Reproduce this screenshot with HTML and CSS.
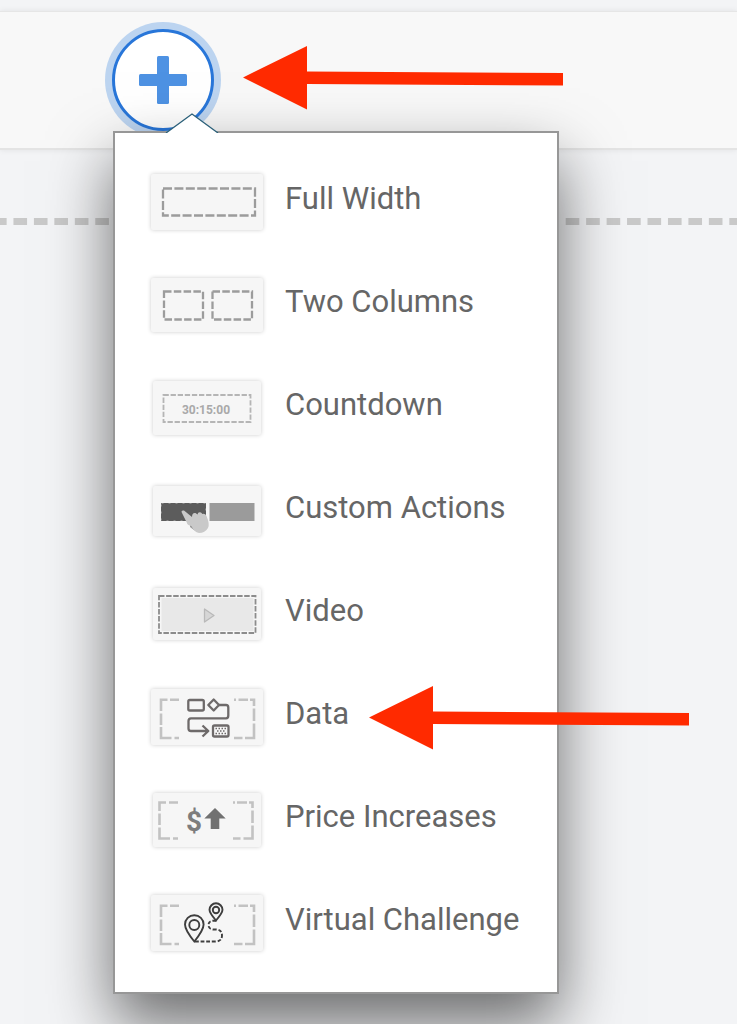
FILE: index.html
```html
<!DOCTYPE html>
<html lang="en">
<head>
    <meta charset="UTF-8">
    <meta name="viewport" content="width=device-width, initial-scale=1.0">
    <title>Add Section</title>
    <link rel="stylesheet" href="styles.css">
</head>
<body>
    <header class="toolbar">
        <div class="add-section">
            <button type="button" class="add-btn" aria-label="Add section" aria-expanded="true">
                <svg class="plus" viewBox="0 0 48 48" aria-hidden="true">
                    <rect x="18" y="0" width="12" height="48" rx="1.5"/>
                    <rect x="0" y="18" width="48" height="12" rx="1.5"/>
                </svg>
            </button>

            <div class="menu">
                <svg class="menu-caret" viewBox="0 0 54 20" aria-hidden="true">
                    <path class="caret-fill" d="M1 20 27 1 53 20z"/>
                    <path class="caret-line" d="M1 20 27 1 53 20"/>
                </svg>
                <ul class="menu-list">
                    <li>
                        <button type="button" class="menu-item">
                            <span class="thumb">
                                <svg class="card" width="112" height="56" viewBox="0 0 112 56" aria-hidden="true">
                                    <path class="dash" stroke-dasharray="9 2.4" d="M12 14.5H104V41.5H12z"/>
                                </svg>
                            </span>
                            <span class="label">Full Width</span>
                        </button>
                    </li>
                    <li>
                        <button type="button" class="menu-item">
                            <span class="thumb">
                                <svg class="card" width="112" height="54" viewBox="0 0 112 54" aria-hidden="true">
                                    <path class="dash" stroke-dasharray="7.5 2.3" d="M13 13.5H52V41.5H13z"/>
                                    <path class="dash" stroke-dasharray="7.5 2.3" d="M61.5 13.5H101V41.5H61.5z"/>
                                </svg>
                            </span>
                            <span class="label">Two Columns</span>
                        </button>
                    </li>
                    <li>
                        <button type="button" class="menu-item">
                            <span class="thumb">
                                <svg class="card" width="108" height="54" viewBox="0 0 108 54" aria-hidden="true">
                                    <path class="dash light" stroke-dasharray="5.3 1.8" d="M10.5 14H97.5V41H10.5z"/>
                                    <text class="timer" x="53" y="33">30:15:00</text>
                                </svg>
                            </span>
                            <span class="label">Countdown</span>
                        </button>
                    </li>
                    <li>
                        <button type="button" class="menu-item">
                            <span class="thumb">
                                <svg class="card" width="108" height="50" viewBox="0 0 108 50" aria-hidden="true">
                                    <rect x="8" y="17" width="45" height="18" fill="#5c5c5c"/>
                                    <rect x="8.5" y="17.5" width="44" height="17" fill="none" stroke="#8a8a8a" stroke-dasharray="2 5"/>
                                    <rect x="56.5" y="17" width="45" height="18" fill="#9b9b9b"/>
                                    <path d="M37 36v5q4 4 9 5l2-8z" fill="#9a9a9a"/>
                                    <path d="M29 27Q27.5 24 31 24.5L39 31Q39 26.5 42.5 27L44.5 28.5Q45 25.5 48 26.5L49.5 28Q52 27 53.5 30Q57 38 55 42Q52 47 46 47Q41 46 38.5 40Q34 39 34 37z" fill="#c9c9c9"/>
                                </svg>
                            </span>
                            <span class="label">Custom Actions</span>
                        </button>
                    </li>
                    <li>
                        <button type="button" class="menu-item">
                            <span class="thumb">
                                <svg class="card" width="108" height="52" viewBox="0 0 108 52" aria-hidden="true">
                                    <rect x="8.5" y="10" width="92" height="33" fill="#e8e8e8"/>
                                    <path class="dash dark" stroke-dasharray="5.5 1.6" d="M6 8H102.5V45H6z"/>
                                    <path d="M51.5 21V34L61 27.5z" fill="#d6d6d6" stroke="#b9b9b9" stroke-width="1.3" stroke-linejoin="round"/>
                                </svg>
                            </span>
                            <span class="label">Video</span>
                        </button>
                    </li>
                    <li>
                        <button type="button" class="menu-item">
                            <span class="thumb">
                                <svg class="card" width="112" height="56" viewBox="0 0 112 56" aria-hidden="true">
                                    <path class="bracket" d="M10 22V10.7H16.5M19 10.7H28M10 24.5V36M10 38V49H20.5M23.5 49H28M83 10.7H85M87.5 10.7H97M99 10.7H103V17M103 19.5V32M103 34.5V49H94M91.5 49H83"/>
                                    <g class="flow">
                                        <rect x="37.3" y="11" width="15.5" height="10.5" rx="1.5"/>
                                        <path d="M62.7 10.5 68 16 62.7 21.5 57.3 16z"/>
                                        <path d="M68 16H75Q77.3 16 77.3 18.5V26.5Q77.3 29.3 75 29.3H40Q37.5 29.3 37.5 32V39.5Q37.5 42 40 42H57M51.5 36.5 57.3 42 51.5 47.5"/>
                                        <rect x="62" y="36.5" width="15.5" height="11" rx="1.5"/>
                                    </g>
                                    <path d="M64.5 39.5H75.5M66 42H74.5M64.5 44.5H75.5" stroke="#6e6a6a" stroke-width="1.5" stroke-dasharray="1.5 1.5" fill="none"/>
                                </svg>
                            </span>
                            <span class="label">Data</span>
                        </button>
                    </li>
                    <li>
                        <button type="button" class="menu-item">
                            <span class="thumb">
                                <svg class="card" width="108" height="54" viewBox="0 0 108 54" aria-hidden="true">
                                    <path class="bracket" d="M6.5 18V9.5H13M16 9.5H25M6.5 20.5V32M6.5 34.5V45.5H17M20 45.5H25M80 9.5H82M84 9.5H94M96 9.5H99.5V15M99.5 17.5V30M99.5 32.5V45.5H90.5M87.5 45.5H80"/>
                                    <text class="dollar" x="41" y="38">$</text>
                                    <path d="M62 15 72.7 25.5H66.3V36H57.7V25.5H51.3z" fill="#717171"/>
                                </svg>
                            </span>
                            <span class="label">Price Increases</span>
                        </button>
                    </li>
                    <li>
                        <button type="button" class="menu-item">
                            <span class="thumb">
                                <svg class="card" width="112" height="56" viewBox="0 0 112 56" aria-hidden="true">
                                    <path class="bracket" d="M10 22V10.7H16.5M19 10.7H28M10 24.5V36M10 38V49H20.5M23.5 49H28M83 10.7H85M87.5 10.7H97M99 10.7H103V17M103 19.5V32M103 34.5V49H94M91.5 49H83"/>
                                    <g class="route">
                                        <path d="M43.3 46.5Q34 35 34 29.5A9.3 9.3 0 0 1 52.6 29.5Q52.6 35 43.3 46.5z"/>
                                        <circle cx="43.3" cy="30" r="5"/>
                                        <path d="M65 25.5Q58.5 18 58.5 14.8A6.5 6.5 0 0 1 71.5 14.8Q71.5 18 65 25.5z"/>
                                        <circle cx="65" cy="15" r="3.2"/>
                                        <path stroke-dasharray="3.8 1.8" d="M44 46.5H64Q71 46.5 71 40.5T64.5 34.5H62Q57.5 34 57.5 30T62 25.7H66"/>
                                    </g>
                                </svg>
                            </span>
                            <span class="label">Virtual Challenge</span>
                        </button>
                    </li>
                </ul>
            </div>
        </div>
    </header>

    <main class="canvas">
        <hr class="drop-line">
    </main>

    <!-- pointers drawn over the page -->
    <svg class="arrow arrow-add" viewBox="0 0 320 64" aria-hidden="true">
        <path d="M0 31.5 64 0V25.5L320 27V39.5L64 38V63.5z"/>
    </svg>
    <svg class="arrow arrow-data" viewBox="0 0 320 64" aria-hidden="true">
        <path d="M0 31.5 64 0V25.5L320 27V39.5L64 38V63.5z"/>
    </svg>
</body>
</html>
```

FILE: styles.css
```css
* {
    box-sizing: border-box;
}
body {
    margin: 0;
    padding-top: 11px;
    position: relative;
    min-height: 100vh;
    overflow-x: hidden;
    background-color: #f3f4f6;
    color: #666;
    font-family: Roboto, Arial, sans-serif;
}
button {
    font-family: inherit;
    color: inherit;
    cursor: pointer;
}

/* Toolbar */
.toolbar {
    padding: 17px 112px;
    background-color: #f8f8f8;
    border-top: 1px solid #e6e6e6;
    border-bottom: 2px solid #e4e4e4;
    box-shadow: 0 0 6px rgba(0, 0, 0, 0.08);
}
.add-section {
    position: relative;
    width: 102px;
}
.add-btn {
    display: flex;
    align-items: center;
    justify-content: center;
    width: 102px;
    height: 102px;
    padding: 0;
    background-color: #fff;
    border: 3px solid #2876d9;
    border-radius: 50%;
    box-shadow: 0 0 0 7px #bcd4f0;
}
.plus {
    width: 48px;
    height: 48px;
    fill: #4e92e3;
}

/* Dropdown */
.menu {
    position: absolute;
    top: 100%;
    left: 1px;
    z-index: 2;
    width: max-content;
    padding: 17px 0 18px;
    background-color: #fff;
    border: 2px solid #979797;
    box-shadow: 0 30px 60px rgba(0, 0, 0, 0.56);
}
.menu-caret {
    position: absolute;
    top: -20px;
    left: 50px;
    width: 54px;
    height: 20px;
}
.caret-fill {
    fill: #fff;
}
.caret-line {
    fill: none;
    stroke: #2b6079;
    stroke-width: 1.3;
}
.menu-list {
    margin: 0;
    padding: 0;
    list-style: none;
}
.menu-item {
    display: flex;
    align-items: center;
    gap: 22px;
    width: 100%;
    height: 103px;
    padding: 0 38px 0 36px;
    background: none;
    border: none;
    text-align: left;
}
.label {
    padding-bottom: 5px;
    font-size: 31px;
    line-height: 40px;
}

/* Section previews */
.thumb {
    display: flex;
    justify-content: center;
    width: 112px;
}
.card {
    background-color: #f6f6f6;
    border-radius: 2px;
    box-shadow: 0 0 4px rgba(0, 0, 0, 0.2);
}
.dash {
    fill: none;
    stroke: #9c9c9c;
    stroke-width: 2.3;
}
.dash.light {
    stroke: #b5b5b5;
    stroke-width: 1.8;
}
.dash.dark {
    stroke: #8c8c8c;
    stroke-width: 1.8;
}
.bracket {
    fill: none;
    stroke: #c2c2c2;
    stroke-width: 2.6;
}
.timer {
    fill: #a9a9a9;
    font-size: 12px;
    font-weight: 700;
    text-anchor: middle;
}
.dollar {
    fill: #7d7d7d;
    font-size: 28px;
    font-weight: 700;
    text-anchor: middle;
}
.flow {
    fill: none;
    stroke: #6e6a6a;
    stroke-width: 2.3;
    stroke-linejoin: round;
}
.route {
    fill: none;
    stroke: #3e3e3e;
    stroke-width: 1.9;
}

/* Page canvas */
.canvas {
    padding-top: 68px;
}
.drop-line {
    height: 7px;
    margin: 0 -13px 0 -7px;
    border: none;
    background-image: linear-gradient(to right, #c9c9c9 68%, transparent 68%);
    background-size: calc(100% / 37) 7px;
}

/* Pointers */
.arrow {
    position: absolute;
    z-index: 3;
    width: 320px;
    height: 64px;
    fill: #ff2a00;
}
.arrow-add {
    top: 46px;
    left: 243px;
}
.arrow-data {
    top: 686px;
    left: 369px;
}
```
